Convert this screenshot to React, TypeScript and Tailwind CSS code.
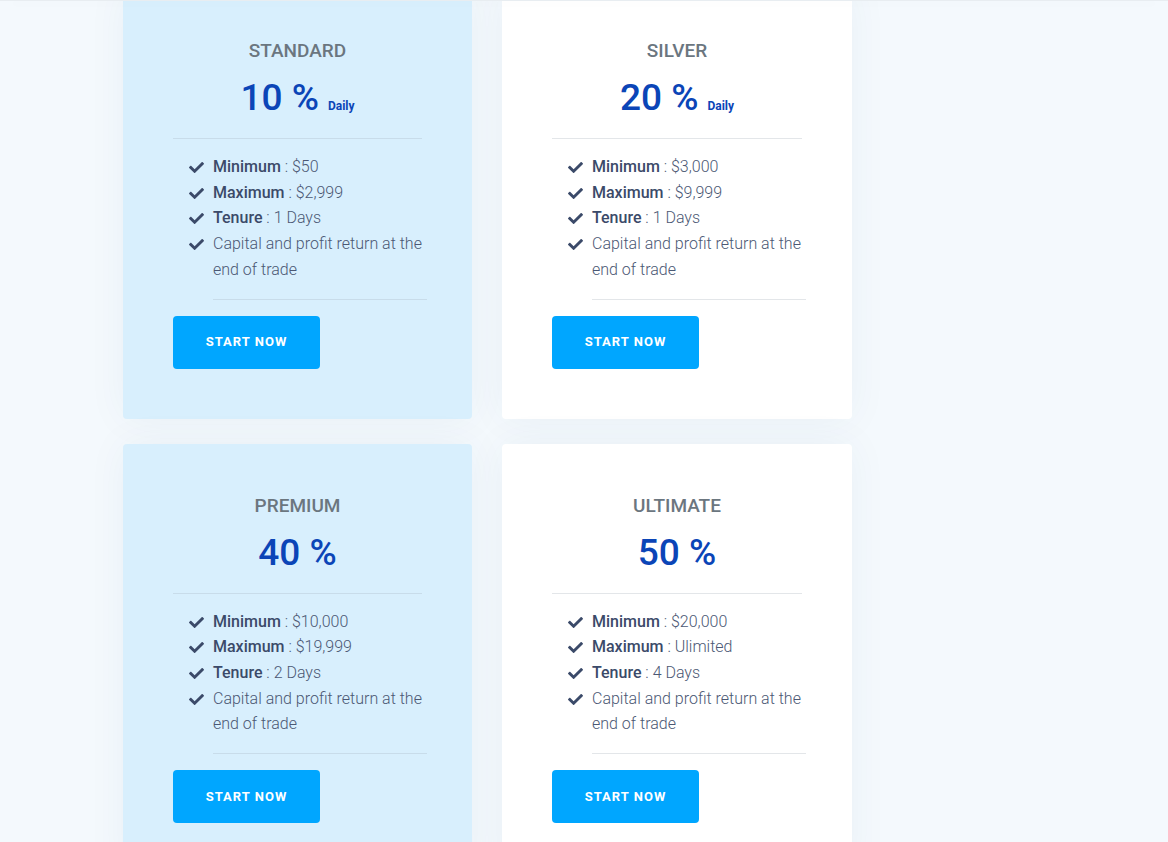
import { FaCheck } from "react-icons/fa";

interface Plan {
  name: string;
  rate: string;
  daily?: boolean;
  min: string;
  max: string;
  tenure: string;
  tinted: boolean;
}

const PLANS: Plan[] = [
  { name: "STANDARD", rate: "10 %", daily: true, min: "$50", max: "$2,999", tenure: "1 Days", tinted: true },
  { name: "SILVER", rate: "20 %", daily: true, min: "$3,000", max: "$9,999", tenure: "1 Days", tinted: false },
  { name: "PREMIUM", rate: "40 %", min: "$10,000", max: "$19,999", tenure: "2 Days", tinted: true },
  { name: "ULTIMATE", rate: "50 %", min: "$20,000", max: "Ulimited", tenure: "4 Days", tinted: false },
];

function Item({ label, value }: { label?: string; value: string }) {
  return (
    <li className="relative">
      <FaCheck className="absolute -left-[24px] top-[6px] text-[#3b4a69]" size={15} />
      {label && <span className="font-medium text-[#3b4a69]">{label}</span>}
      {label ? " : " : ""}
      {value}
    </li>
  );
}

function PlanCard({ plan }: { plan: Plan }) {
  const line = plan.tinted ? "border-[#c8dcea]" : "border-[#e3e6e9]";
  return (
    <div
      className={`rounded-[4px] px-[50px] pt-[50px] pb-[50px] shadow-[0_0_40px_rgba(20,70,120,0.05)] ${
        plan.tinted ? "bg-[#d8effd]" : "bg-white"
      }`}
    >
      <h3 className="text-center text-[19px] leading-[24px] font-medium text-[#6b767f]">{plan.name}</h3>
      <div className={`mt-[11px] pb-[16px] border-b ${line} text-center`}>
        <span className="text-[37px] leading-[48px] font-medium text-[#0b45b7]">{plan.rate}</span>
        {plan.daily && <span className="ml-[9px] text-[12px] font-bold text-[#0b45b7]">Daily</span>}
      </div>
      <ul className={`mt-[15px] ml-[40px] w-[214px] pb-[16px] border-b ${line} text-[16px] leading-[25.7px] font-light text-[#4b5874]`}>
        <Item label="Minimum" value={plan.min} />
        <Item label="Maximum" value={plan.max} />
        <Item label="Tenure" value={plan.tenure} />
        <Item value="Capital and profit return at the end of trade" />
      </ul>
      <button className="mt-[16px] w-[147px] h-[53px] rounded-[4px] bg-[#00a6ff] text-white text-[13px] font-bold tracking-[1px]">
        START NOW
      </button>
    </div>
  );
}

export default function App() {
  return (
    <div className="h-[842px] overflow-hidden bg-[#f4f9fd]" style={{ fontFamily: "Roboto, 'Noto Sans', sans-serif" }}>
      <div className="fixed top-0 left-0 right-0 z-10 h-px bg-[#e8edf1] shadow-[0_3px_18px_rgba(0,0,0,0.09)]" />
      <div className="-mt-[11px] pl-[123px]">
        <div className="grid grid-cols-[349px_350px] gap-x-[30px] gap-y-[25px]">
          {PLANS.map(p => (
            <PlanCard key={p.name} plan={p} />
          ))}
        </div>
      </div>
    </div>
  );
}
